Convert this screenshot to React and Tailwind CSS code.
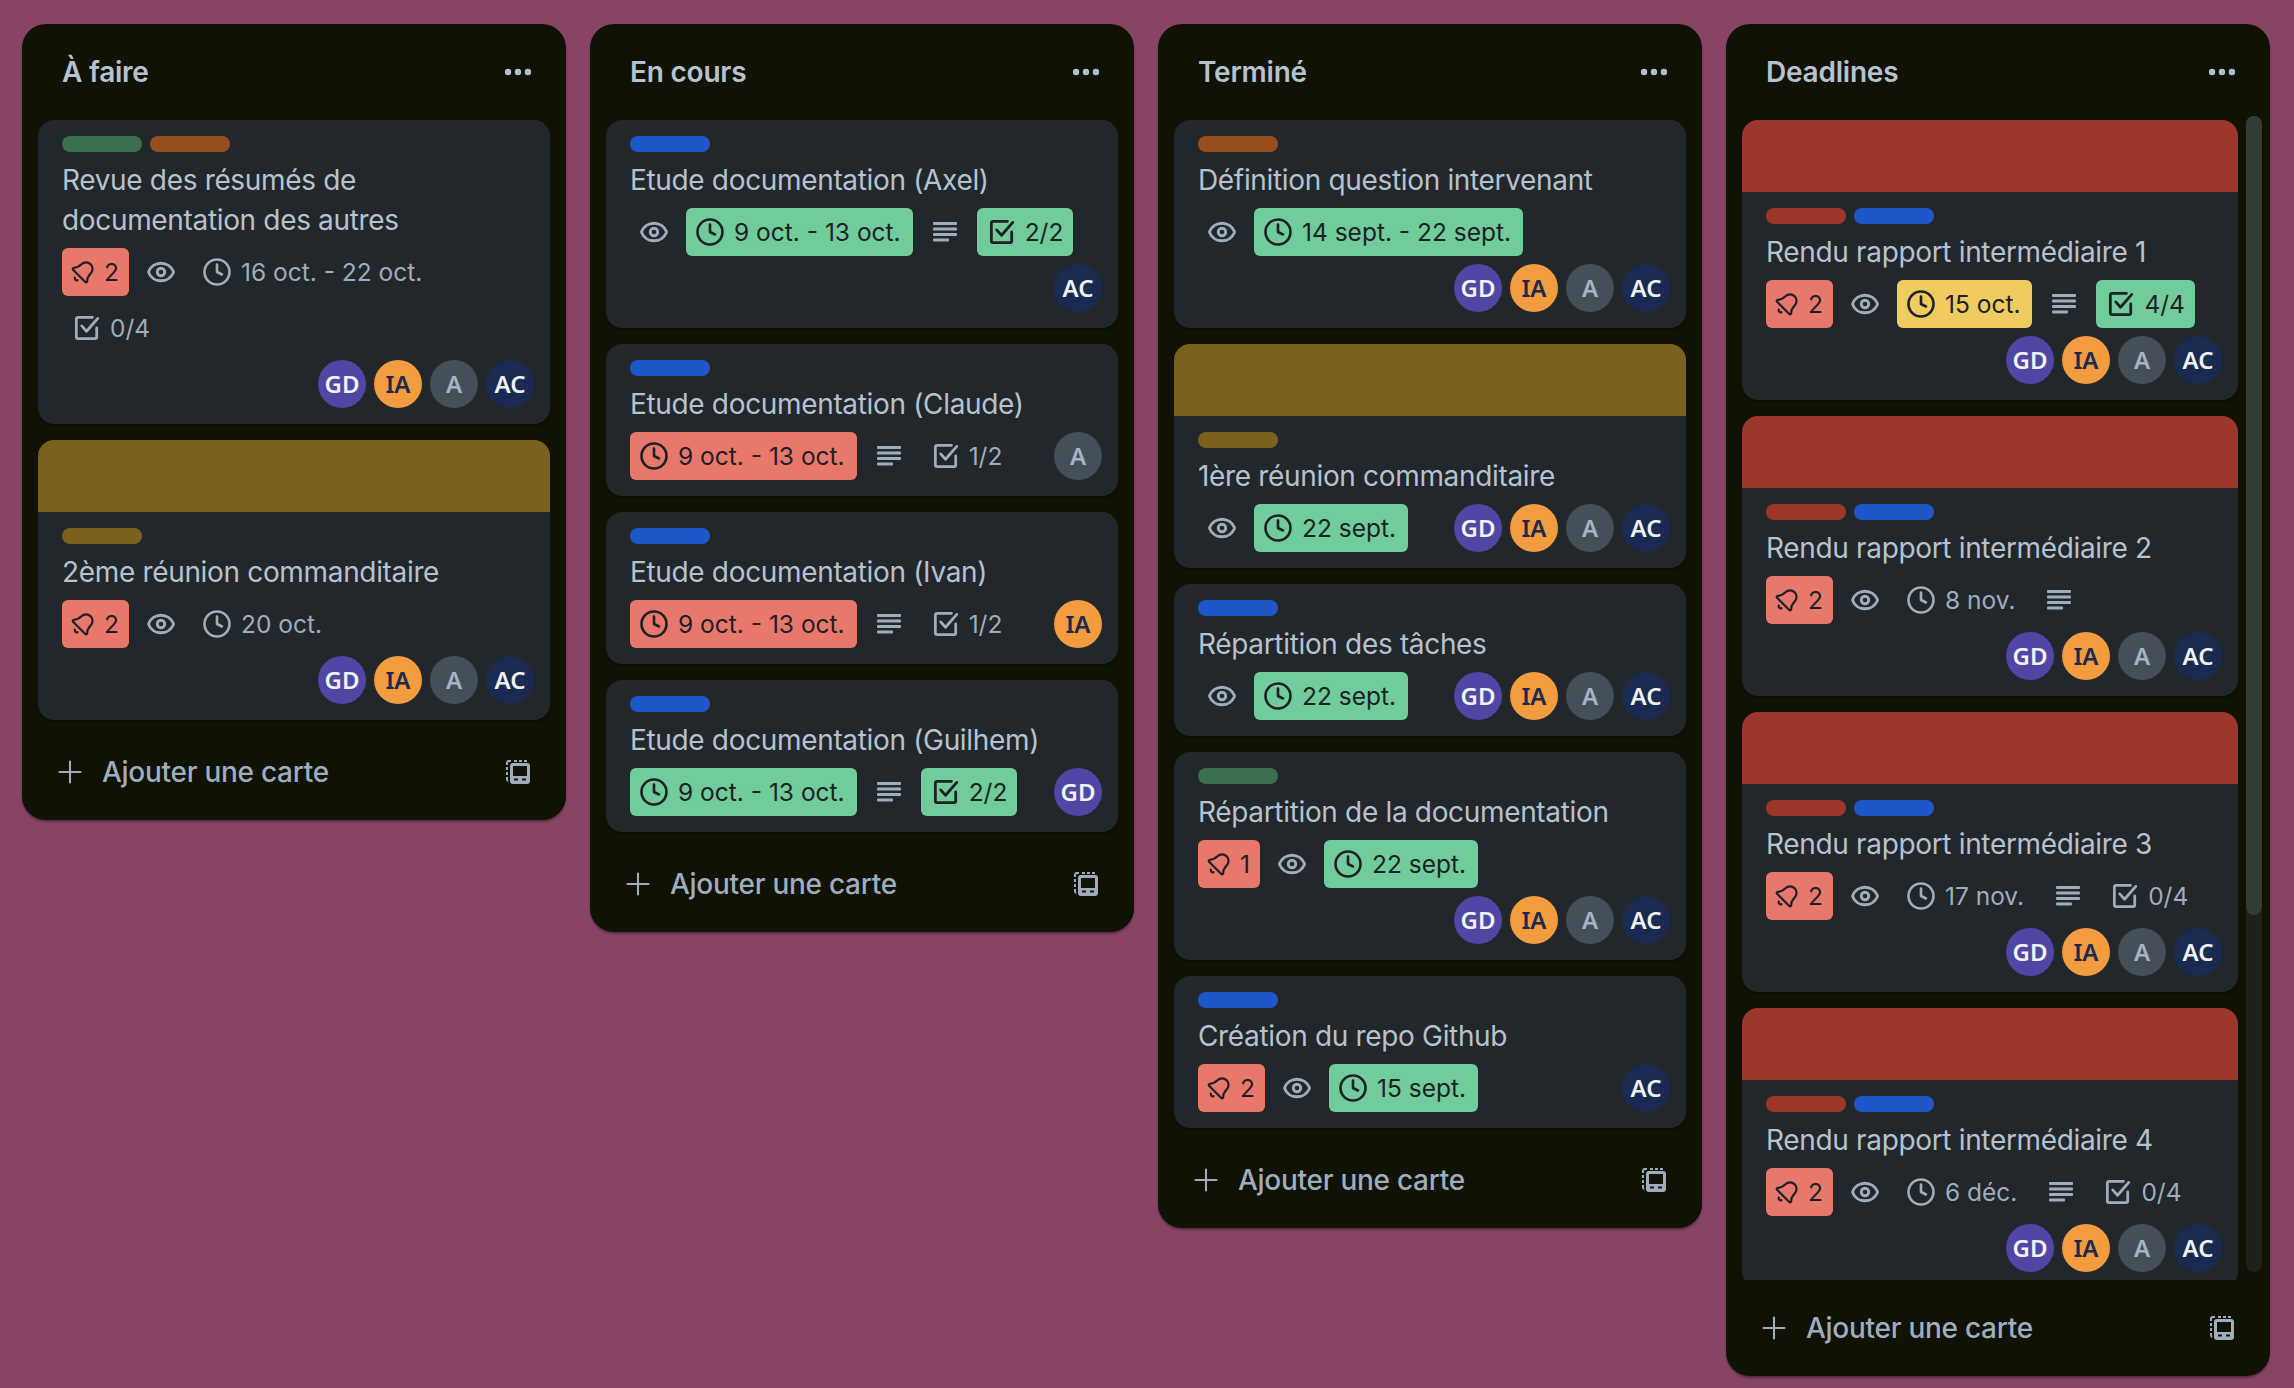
import React from 'react';
import { Bell, Clock, Ellipsis, Eye, Plus } from 'lucide-react';

const GREEN = 'bg-[#3a6f52]';
const ORANGE = 'bg-[#964e1c]';
const OLIVE = 'bg-[#7a611d]';
const RED = 'bg-[#9d372c]';
const BLUE = 'bg-[#1e58c8]';

const everyone = ['GD', 'IA', 'A', 'AC'];

const members = {
  GD: 'bg-[#5047a5] text-[#f1f2f4]',
  IA: 'bg-[#f39c3f] text-[#1c2b4d]',
  A: 'bg-[#454f59] text-[#a6b3c2]',
  AC: 'bg-[#1a2a50] text-[#f1f2f4]',
};

function CheckIcon() {
  return (
    <svg width="30" height="30" viewBox="0 0 28 28" fill="none" stroke="currentColor" strokeWidth="2.6" strokeLinecap="round" strokeLinejoin="round">
      <path d="M20 4H6.5A1.5 1.5 0 0 0 5 5.5v17A1.5 1.5 0 0 0 6.5 24h16a1.5 1.5 0 0 0 1.5-1.5V14" />
      <path d="M10 12l4.5 5L25 5" />
    </svg>
  );
}

function DescriptionIcon() {
  return (
    <svg width="24" height="20" viewBox="0 0 24 20" fill="currentColor">
      <rect x="0" y="0" width="24" height="3" rx="1" />
      <rect x="0" y="5.5" width="24" height="3" rx="1" />
      <rect x="0" y="11" width="24" height="3" rx="1" />
      <rect x="0" y="16.5" width="16" height="3" rx="1" />
    </svg>
  );
}

function TemplateIcon() {
  return (
    <svg width="24" height="24" viewBox="0 0 24 24" fill="currentColor">
      <path d="M8 0h3v2H8zM13 0h3v2h-3zM18 0h2a3 3 0 0 1 1 .2V2h-3zM0 3a3 3 0 0 1 3-3h2v2H3a1 1 0 0 0-1 1v2H0zM0 7h2v3H0zM0 12h2v3H0zM0 17h2v2a1 1 0 0 0 .3.7V22A3 3 0 0 1 0 19z" />
      <path fillRule="evenodd" d="M7 3h14a3 3 0 0 1 3 3v15a3 3 0 0 1-3 3H7a3 3 0 0 1-3-3V6a3 3 0 0 1 3-3zm0 3v10h14V6zm1 12.500v2h4v-2zm8 0v2h4v-2z" />
    </svg>
  );
}

function Avatars({ names }) {
  return (
    <div className="ml-auto flex gap-2">
      {names.map((name) => (
        <span
          className={`flex h-12 w-12 items-center justify-center rounded-full font-['Noto_Sans'] text-[24px] font-semibold ${members[name]}`}
          key={name}
        >
          {name}
        </span>
      ))}
    </div>
  );
}

function Notifications({ count }) {
  return (
    <span className="flex h-12 items-center gap-2 rounded-md bg-[#e8786c] pl-2 pr-[10px] text-[#1d2125]">
      <Bell size={26} strokeWidth={2} className="rotate-45" />
      <span>{count}</span>
    </span>
  );
}

function Watching() {
  return (
    <span className="flex h-12 w-12 items-center justify-center text-[#9fadbc]">
      <Eye size={30} strokeWidth={2.3} />
    </span>
  );
}

function DueDate({ text, color }) {
  const tone = {
    green: 'bg-[#70cc9b] text-[#1d2125]',
    red: 'bg-[#e8786c] text-[#1d2125]',
    yellow: 'bg-[#f0cc60] text-[#1d2125]',
    none: 'text-[#9fadbc]',
  }[color];

  return (
    <span className={`flex h-12 items-center gap-2 rounded-md pl-2 pr-3 ${tone}`}>
      <span className="flex w-8 justify-center">
        <Clock size={30} strokeWidth={2.1} />
      </span>
      <span>{text}</span>
    </span>
  );
}

function Description() {
  return (
    <span className="flex h-12 w-12 items-center justify-center text-[#9fadbc]">
      <DescriptionIcon />
    </span>
  );
}

function Checklist({ text, done }) {
  return (
    <span className={`flex h-12 items-center gap-2 rounded-md pl-2 pr-[10px] ${done ? 'bg-[#70cc9b] text-[#1d2125]' : 'text-[#9fadbc]'}`}>
      <span className="flex w-8 justify-center">
        <CheckIcon />
      </span>
      <span>{text}</span>
    </span>
  );
}

function Card({ cover, labels, title, children, team }) {
  return (
    <article className="shrink-0 overflow-hidden rounded-2xl bg-[#22272b] shadow-[0_2px_2px_rgba(0,0,0,0.35)]">
      {cover && <div className={`h-[72px] ${cover}`} />}
      <div className="pb-4 pl-6 pr-4 pt-4">
        <div className="flex gap-2">
          {labels.map((label, index) => (
            <span className={`h-4 w-20 rounded-lg ${label}`} key={index} />
          ))}
        </div>
        <h3 className="mt-2 text-[28px] font-normal leading-10 tracking-[-0.012em] text-[#b6c2cf]">{title}</h3>
        <div className="mt-2 flex flex-wrap items-center gap-2 text-[24.500px] leading-8">
          <div className="flex flex-wrap gap-2">{children}</div>
          <Avatars names={team} />
        </div>
      </div>
    </article>
  );
}

function Column({ title, children, scroll }) {
  return (
    <section className="flex w-[544px] shrink-0 flex-col rounded-3xl bg-[#101204] shadow-[0_2px_2px_rgba(0,0,0,0.35)]">
      <header className="flex h-[92px] items-center justify-between pl-10 pr-[31px] pt-1 text-[#b6c2cf]">
        <h2 className="text-[28px] font-semibold leading-10 tracking-[-0.008em]">{title}</h2>
        <Ellipsis size={34} strokeWidth={2.5} />
      </header>
      <div className={scroll ? 'relative h-[1164px] overflow-hidden' : ''}>
        <div className={`flex flex-col gap-4 pb-1 pl-4 pt-1 ${scroll ? 'pr-8' : 'pr-4'}`}>{children}</div>
        {scroll && (
          <div className="absolute bottom-2 right-2 top-0 w-4 rounded-lg bg-[#1d2119]">
            <div className="h-[799px] rounded-lg bg-[#333c36]" />
          </div>
        )}
      </div>
      <footer className="flex h-24 items-start justify-between pl-[30px] pr-9 pt-5 text-[#9fadbc]">
        <div className="flex h-14 items-center gap-[14px]">
          <Plus size={36} strokeWidth={1.4} />
          <span className="text-[28px] font-medium tracking-[-0.01em]">Ajouter une carte</span>
        </div>
        <div className="flex h-14 items-center">
          <TemplateIcon />
        </div>
      </footer>
    </section>
  );
}

function Deadline({ title, date, color, checklist, done }) {
  return (
    <Card cover={RED} labels={[RED, BLUE]} title={title} team={everyone}>
      <Notifications count={2} />
      <Watching />
      <DueDate text={date} color={color} />
      <Description />
      {checklist && <Checklist text={checklist} done={done} />}
    </Card>
  );
}

export default function App() {
  return (
    <div className="flex min-h-screen items-start gap-6 bg-[#874465] px-[22px] pt-6 font-['Inter',sans-serif]">
      <Column title="À faire">
        <Card labels={[GREEN, ORANGE]} title="Revue des résumés de documentation des autres" team={everyone}>
          <Notifications count={2} />
          <Watching />
          <DueDate text="16 oct. - 22 oct." color="none" />
          <Checklist text="0/4" />
        </Card>
        <Card cover={OLIVE} labels={[OLIVE]} title="2ème réunion commanditaire" team={everyone}>
          <Notifications count={2} />
          <Watching />
          <DueDate text="20 oct." color="none" />
        </Card>
      </Column>

      <Column title="En cours">
        <Card labels={[BLUE]} title="Etude documentation (Axel)" team={['AC']}>
          <Watching />
          <DueDate text="9 oct. - 13 oct." color="green" />
          <Description />
          <Checklist text="2/2" done />
        </Card>
        <Card labels={[BLUE]} title="Etude documentation (Claude)" team={['A']}>
          <DueDate text="9 oct. - 13 oct." color="red" />
          <Description />
          <Checklist text="1/2" />
        </Card>
        <Card labels={[BLUE]} title="Etude documentation (Ivan)" team={['IA']}>
          <DueDate text="9 oct. - 13 oct." color="red" />
          <Description />
          <Checklist text="1/2" />
        </Card>
        <Card labels={[BLUE]} title="Etude documentation (Guilhem)" team={['GD']}>
          <DueDate text="9 oct. - 13 oct." color="green" />
          <Description />
          <Checklist text="2/2" done />
        </Card>
      </Column>

      <Column title="Terminé">
        <Card labels={[ORANGE]} title="Définition question intervenant" team={everyone}>
          <Watching />
          <DueDate text="14 sept. - 22 sept." color="green" />
        </Card>
        <Card cover={OLIVE} labels={[OLIVE]} title="1ère réunion commanditaire" team={everyone}>
          <Watching />
          <DueDate text="22 sept." color="green" />
        </Card>
        <Card labels={[BLUE]} title="Répartition des tâches" team={everyone}>
          <Watching />
          <DueDate text="22 sept." color="green" />
        </Card>
        <Card labels={[GREEN]} title="Répartition de la documentation" team={everyone}>
          <Notifications count={1} />
          <Watching />
          <DueDate text="22 sept." color="green" />
        </Card>
        <Card labels={[BLUE]} title="Création du repo Github" team={['AC']}>
          <Notifications count={2} />
          <Watching />
          <DueDate text="15 sept." color="green" />
        </Card>
      </Column>

      <Column title="Deadlines" scroll>
        <Deadline title="Rendu rapport intermédiaire 1" date="15 oct." color="yellow" checklist="4/4" done />
        <Deadline title="Rendu rapport intermédiaire 2" date="8 nov." color="none" />
        <Deadline title="Rendu rapport intermédiaire 3" date="17 nov." color="none" checklist="0/4" />
        <Deadline title="Rendu rapport intermédiaire 4" date="6 déc." color="none" checklist="0/4" />
      </Column>
    </div>
  );
}
